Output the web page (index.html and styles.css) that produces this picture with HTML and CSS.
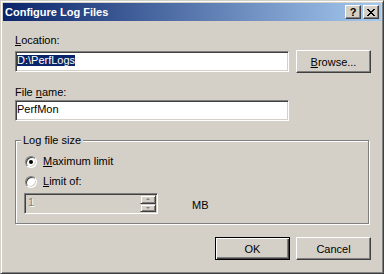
FILE: index.html
```html
<!DOCTYPE html>
<html lang="en">
<head>
  <meta charset="UTF-8" />
  <title>Configure Log Files</title>
  <link rel="stylesheet" href="styles.css">
</head>
<body>
  <div class="window">
    <div class="titlebar">
      <span class="title">Configure Log Files</span>
      <div class="caption-buttons">
        <button class="cap-btn help">?</button>
        <button class="cap-btn close">
          <svg width="8" height="7" viewBox="0 0 8 7" shape-rendering="crispEdges">
            <path d="M0 0h2v1h-2z M6 0h2v1h-2z M1 1h2v1h-2z M5 1h2v1h-2z M2 2h4v1h-4z M3 3h2v1h-2z M2 4h4v1h-4z M1 5h2v1h-2z M5 5h2v1h-2z M0 6h2v1h-2z M6 6h2v1h-2z" fill="#000"/>
          </svg>
        </button>
      </div>
    </div>

    <div class="content">
      <div class="label"><u>L</u>ocation:</div>
      <div class="field-row">
        <div class="edit"><span class="sel">D:\PerfLogs</span></div>
        <button class="btn"><u>B</u>rowse...</button>
      </div>

      <div class="label label-gap">File <u>n</u>ame:</div>
      <div class="edit edit-single">PerfMon</div>

      <fieldset class="group">
        <legend>Log file size</legend>
        <div class="radio-row first">
          <span class="radio checked"></span>
          <span><u>M</u>aximum limit</span>
        </div>
        <div class="radio-row">
          <span class="radio"></span>
          <span><u>L</u>imit of:</span>
        </div>
        <div class="limit-row">
          <div class="spin">
            <span class="spin-value">1</span>
            <div class="spin-buttons">
              <span class="spin-btn up"><i></i></span>
              <span class="spin-btn down"><i></i></span>
            </div>
          </div>
          <span class="unit">MB</span>
        </div>
      </fieldset>

      <div class="actions">
        <button class="btn default">OK</button>
        <button class="btn">Cancel</button>
      </div>
    </div>
  </div>
</body>
</html>
```

FILE: styles.css
```css
body {
  margin: 0;
  background-color: #d4d0c8;
  color: #000;
  font-family: "Liberation Sans", Arial, sans-serif;
  font-size: 11px;
  line-height: 13px;
}
u {
  text-decoration: underline;
  text-underline-offset: 1px;
}
.window {
  width: 384px;
  height: 274px;
  box-sizing: border-box;
  background-color: #d4d0c8;
  border: 1px solid;
  border-color: #d4d0c8 #404040 #404040 #d4d0c8;
  box-shadow: inset 1px 1px #fff, inset -1px -1px #808080;
  padding: 2px;
}
.titlebar {
  height: 18px;
  display: flex;
  align-items: center;
  justify-content: space-between;
  padding: 0 2px;
  background: linear-gradient(to right, #0a246a, #a6caf0);
  color: #fff;
  font-weight: bold;
}
.caption-buttons {
  display: flex;
  gap: 2px;
}
.cap-btn {
  width: 16px;
  height: 14px;
  box-sizing: border-box;
  padding: 0;
  display: flex;
  align-items: center;
  justify-content: center;
  background-color: #d4d0c8;
  border: 1px solid;
  border-color: #fff #404040 #404040 #fff;
  box-shadow: inset -1px -1px #808080;
  font-family: inherit;
  font-size: 11px;
  font-weight: bold;
  line-height: 11px;
  color: #000;
}
.content {
  padding: 13px 10px 0 12px;
}
.label {
  height: 13px;
}
.label-gap {
  margin-top: 13px;
}
.field-row {
  display: flex;
  align-items: center;
  gap: 7px;
  margin-top: 3px;
}
.edit {
  width: 274px;
  height: 21px;
  box-sizing: border-box;
  padding: 3px 1px 0;
  line-height: 11px;
  background-color: #fff;
  border: 1px solid;
  border-color: #808080 #fff #fff #808080;
  box-shadow: inset 1px 1px #404040, inset -1px -1px #d4d0c8;
}
.edit-single {
  margin-top: 1px;
}
.sel {
  display: inline-block;
  background-color: #0a246a;
  color: #fff;
  line-height: 11px;
}
.btn {
  width: 75px;
  height: 23px;
  box-sizing: border-box;
  padding: 0;
  background-color: #d4d0c8;
  border: 1px solid;
  border-color: #fff #404040 #404040 #fff;
  box-shadow: inset -1px -1px #808080;
  font-family: inherit;
  font-size: 11px;
  color: #000;
}
.btn.default {
  border-color: #000;
  box-shadow: inset 1px 1px #fff, inset -1px -1px #404040, inset -2px -2px #808080;
}
.group {
  margin: 13px 2px 0 0;
  padding: 0 0 9px;
  min-inline-size: 0;
  border: 1px solid #808080;
  box-shadow: inset 1px 1px #fff, 1px 1px #fff;
}
.group legend {
  margin-left: 5px;
  padding: 0 2px;
  line-height: 13px;
  background-color: #d4d0c8;
}
.radio-row {
  display: flex;
  align-items: center;
  gap: 6px;
  height: 13px;
  padding-left: 9px;
  margin-top: 7px;
}
.radio-row.first {
  margin-top: 8px;
}
.radio {
  position: relative;
  width: 12px;
  height: 12px;
  box-sizing: border-box;
  border-radius: 50%;
  background-color: #fff;
  border: 1px solid;
  border-color: #808080 #fff #fff #808080;
  box-shadow: inset 1px 1px #404040, inset -1px -1px #d4d0c8;
}
.radio.checked::after {
  content: "";
  position: absolute;
  left: 3px;
  top: 3px;
  width: 4px;
  height: 4px;
  border-radius: 50%;
  background-color: #000;
}
.limit-row {
  display: flex;
  margin-top: 5px;
  margin-left: 8px;
}
.spin {
  width: 134px;
  height: 21px;
  box-sizing: border-box;
  display: flex;
  justify-content: space-between;
  padding: 1px;
  background-color: #d4d0c8;
  border: 1px solid;
  border-color: #808080 #fff #fff #808080;
  box-shadow: inset 1px 1px #404040, inset -1px -1px #d4d0c8;
}
.spin-value {
  padding: 2px 0 0 2px;
  line-height: 11px;
  color: #808080;
  text-shadow: 1px 1px #fff;
}
.spin-buttons {
  width: 16px;
  display: flex;
  flex-direction: column;
}
.spin-btn {
  flex: 1;
  display: flex;
  align-items: center;
  justify-content: center;
  box-sizing: border-box;
  border: 1px solid;
  border-color: #d4d0c8 #404040 #404040 #d4d0c8;
  box-shadow: inset 1px 1px #fff, inset -1px -1px #808080;
}
.spin-btn i {
  width: 0;
  height: 0;
  border-left: 2px solid transparent;
  border-right: 2px solid transparent;
}
.spin-btn.up i {
  border-bottom: 2px solid #808080;
}
.spin-btn.down i {
  border-top: 2px solid #808080;
}
.unit {
  align-self: flex-end;
  margin: 0 0 2px 34px;
}
.actions {
  display: flex;
  justify-content: flex-end;
  gap: 6px;
  margin-top: 13px;
}
```
